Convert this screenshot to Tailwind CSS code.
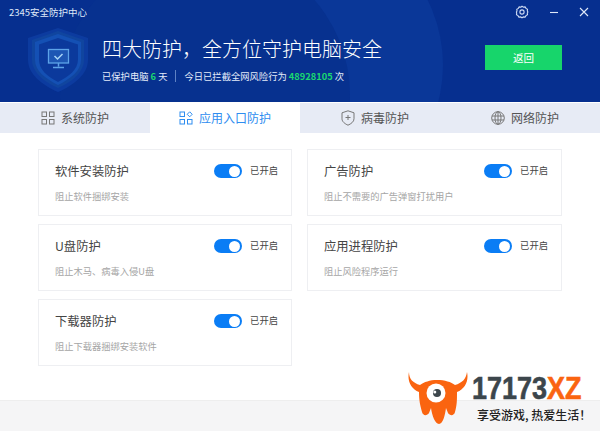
<!DOCTYPE html>
<html lang="zh-CN">
<head>
    <meta charset="UTF-8">
    <title>2345安全防护中心</title>
    <script src="https://cdn.jsdelivr.net/npm/@tailwindcss/browser@4"></script>
</head>
<body class="w-[600px] h-[431px] overflow-hidden bg-white font-['Noto_Sans_CJK_SC',sans-serif] relative">

    <!-- Header -->
    <div class="relative h-[102px] bg-[#062f8f] overflow-hidden text-white">
        <div class="absolute left-[153px] top-[-80px] w-[290px] h-[290px] rounded-full bg-[#0a3798]"></div>
        <div class="absolute left-[60px] top-[-50px] w-[290px] h-[290px] rounded-full bg-[#07318f]"></div>

        <div class="relative flex items-center justify-between h-[24px] pl-[9px] pr-[11px]">
            <span class="text-[9.5px] leading-[24px] text-[#dfe8f8]">2345安全防护中心</span>
            <div class="flex items-center gap-[20px]">
                <svg class="w-[14px] h-[14px]" viewBox="0 0 14 14" fill="none" stroke="#cfdcf4" stroke-width="1.1"><path d="M7 1.2l1.4.9 1.7-.2.9 1.5 1.5.8-.2 1.7.6 1.1-.6 1.1.2 1.7-1.5.8-.9 1.5-1.7-.2-1.4.9-1.4-.9-1.7.2-.9-1.5-1.5-.8.2-1.7L1.4 7l.6-1.1-.2-1.7 1.5-.8.9-1.500 1.700.2z"/><circle cx="7" cy="7" r="2.1"/></svg>
                <svg class="w-[10px] h-[10px]" viewBox="0 0 10 10" stroke="#dfe8f8" stroke-width="1.1"><path d="M1 5.5h8"/></svg>
                <svg class="w-[10px] h-[10px]" viewBox="0 0 10 10" stroke="#dfe8f8" stroke-width="1.1"><path d="M1 1l8 8M9 1l-8 8"/></svg>
            </div>
        </div>

        <div class="relative flex items-start mt-[3px] pl-[28px] pr-[38px]">
            <svg class="w-[60px] h-[64px] mt-[1px] shrink-0" viewBox="0 0 60 64">
                <path d="M30 0l30 10v22c0 14-14 25-30 32C14 57 0 46 0 32V10z" fill="#0c3b9f"/>
                <path d="M30 3l26 9v20c0 12-12 22-26 28C16 54 4 44 4 32V12z" fill="#10459f"/>
                <path d="M30 6l23 8v18c0 11-11 19-23 25C18 51 7 43 7 32V14z" fill="#1450b4"/>
                <path d="M30 10l20 6.500v15c0 10-9 17-20 22.500C19 48.500 11 41.500 11 31.500v-15z" fill="#0b399c"/>
                <rect x="20.500" y="21.500" width="20" height="13.500" fill="#2f74cc" fill-opacity=".5" stroke="#5da3e8" stroke-width="1.300"/>
                <path d="M26.500 28l3 3 5-5" fill="none" stroke="#a8d4f7" stroke-width="1.500"/>
                <path d="M30.500 35v3.500M25 39.500h11" stroke="#5da3e8" stroke-width="1.500"/>
            </svg>
            <div class="ml-[14px] flex-1">
                <div class="text-[20px] font-light leading-[30px] mt-[7px] text-white">四大防护，全方位守护电脑安全</div>
                <div class="flex items-center text-[9.3px] leading-[16px] mt-[4px] text-[#e4ecfa]">
                    <span>已保护电脑 <b class="text-[#1bd86f] font-bold">6</b> 天</span>
                    <span class="w-px h-[12px] bg-[#5f82c4] mx-[8px]"></span>
                    <span>今日已拦截全网风险行为 <b class="text-[#1bd86f] font-bold">48928105</b> 次</span>
                </div>
            </div>
            <div class="w-[77px] h-[25px] mt-[18px] bg-[#17d56b] text-[10.5px] leading-[25px] text-center shrink-0">返回</div>
        </div>
    </div>

    <!-- Tabs -->
    <div class="grid grid-cols-4 h-[30px] mt-px bg-[#e7ebf5] text-[12px] text-[#555]">
        <div class="flex items-center justify-center gap-[6px]">
            <svg class="w-[14px] h-[14px]" viewBox="0 0 14 14" fill="none" stroke="#777" stroke-width="1"><rect x="1" y="1" width="4.500" height="4.500"/><rect x="8.500" y="1" width="4.500" height="4.500"/><rect x="1" y="8.500" width="4.500" height="4.500"/><rect x="8.500" y="8.500" width="4.500" height="4.500"/></svg>
            系统防护
        </div>
        <div class="flex items-center justify-center gap-[6px] bg-white text-[#2e8df0]">
            <svg class="w-[14px] h-[14px]" viewBox="0 0 14 14" fill="none" stroke="#2e8df0" stroke-width="1"><rect x="1" y="1" width="4.500" height="4.500"/><path d="M10.700.8l2.500 2.500-2.500 2.500-2.500-2.500z"/><rect x="1" y="8.500" width="4.500" height="4.500"/><rect x="8.500" y="8.500" width="4.500" height="4.500"/></svg>
            应用入口防护
        </div>
        <div class="flex items-center justify-center gap-[6px]">
            <svg class="w-[14px] h-[16px]" viewBox="0 0 14 16" fill="none" stroke="#777" stroke-width="1"><path d="M7 .8l6 2v6c0 3-3 5-6 6.400C4 13.800 1 11.800 1 8.800v-6z"/><path d="M7 5v5M4.500 7.500h5"/></svg>
            病毒防护
        </div>
        <div class="flex items-center justify-center gap-[6px]">
            <svg class="w-[14px] h-[14px]" viewBox="0 0 14 14" fill="none" stroke="#777" stroke-width="1"><circle cx="7" cy="7" r="6.300"/><ellipse cx="7" cy="7" rx="3" ry="6.300"/><path d="M1 5h12M1 9h12M7 .7v12.600"/></svg>
            网络防护
        </div>
    </div>

    <!-- Cards -->
    <div class="grid grid-cols-[254px_255px] gap-x-[15px] gap-y-[8px] pl-[38px] pt-[16px]">
        <div class="h-[67px] border border-[#eeeff2] pl-[16px] pr-[13px] pt-[13px]">
            <div class="flex items-center justify-between h-[16px]">
                <span class="text-[12.300px] text-[#444]">软件安装防护</span>
                <div class="flex items-center gap-[8px]">
                    <span class="flex justify-end items-center w-[28px] h-[14px] p-[2px] rounded-full bg-[#0a7df5]"><i class="w-[11px] h-[11px] rounded-full bg-white"></i></span>
                    <span class="text-[9.300px] text-[#444]">已开启</span>
                </div>
            </div>
            <div class="text-[9.250px] leading-[12px] mt-[11px] text-[#a5a5a5]">阻止软件捆绑安装</div>
        </div>
        <div class="h-[67px] border border-[#eeeff2] pl-[16px] pr-[13px] pt-[13px]">
            <div class="flex items-center justify-between h-[16px]">
                <span class="text-[12.300px] text-[#444]">广告防护</span>
                <div class="flex items-center gap-[8px]">
                    <span class="flex justify-end items-center w-[28px] h-[14px] p-[2px] rounded-full bg-[#0a7df5]"><i class="w-[11px] h-[11px] rounded-full bg-white"></i></span>
                    <span class="text-[9.300px] text-[#444]">已开启</span>
                </div>
            </div>
            <div class="text-[9.250px] leading-[12px] mt-[11px] text-[#a5a5a5]">阻止不需要的广告弹窗打扰用户</div>
        </div>
        <div class="h-[67px] border border-[#eeeff2] pl-[16px] pr-[13px] pt-[13px]">
            <div class="flex items-center justify-between h-[16px]">
                <span class="text-[12.300px] text-[#444]">U盘防护</span>
                <div class="flex items-center gap-[8px]">
                    <span class="flex justify-end items-center w-[28px] h-[14px] p-[2px] rounded-full bg-[#0a7df5]"><i class="w-[11px] h-[11px] rounded-full bg-white"></i></span>
                    <span class="text-[9.300px] text-[#444]">已开启</span>
                </div>
            </div>
            <div class="text-[9.250px] leading-[12px] mt-[11px] text-[#a5a5a5]">阻止木马、病毒入侵U盘</div>
        </div>
        <div class="h-[67px] border border-[#eeeff2] pl-[16px] pr-[13px] pt-[13px]">
            <div class="flex items-center justify-between h-[16px]">
                <span class="text-[12.300px] text-[#444]">应用进程防护</span>
                <div class="flex items-center gap-[8px]">
                    <span class="flex justify-end items-center w-[28px] h-[14px] p-[2px] rounded-full bg-[#0a7df5]"><i class="w-[11px] h-[11px] rounded-full bg-white"></i></span>
                    <span class="text-[9.300px] text-[#444]">已开启</span>
                </div>
            </div>
            <div class="text-[9.250px] leading-[12px] mt-[11px] text-[#a5a5a5]">阻止风险程序运行</div>
        </div>
        <div class="h-[67px] border border-[#eeeff2] pl-[16px] pr-[13px] pt-[13px]">
            <div class="flex items-center justify-between h-[16px]">
                <span class="text-[12.300px] text-[#444]">下载器防护</span>
                <div class="flex items-center gap-[8px]">
                    <span class="flex justify-end items-center w-[28px] h-[14px] p-[2px] rounded-full bg-[#0a7df5]"><i class="w-[11px] h-[11px] rounded-full bg-white"></i></span>
                    <span class="text-[9.300px] text-[#444]">已开启</span>
                </div>
            </div>
            <div class="text-[9.250px] leading-[12px] mt-[11px] text-[#a5a5a5]">阻止下载器捆绑安装软件</div>
        </div>
    </div>

    <!-- Footer -->
    <div class="absolute left-0 right-0 bottom-0 h-[31px] bg-[#f5f5f6] border-t border-[#eeeeee]"></div>

    <!-- Watermark -->
    <div class="absolute left-[408px] top-[372px] flex">
        <svg class="w-[60px] h-[52px] shrink-0" viewBox="0 0 60 52">
            <path d="M1 0c0 7 4 11 11 13 4-3 10-5 17-5 8 0 14 2 18 5 7-2 11-6 12-13 2 9-2 17-10 20 0 8 0 13-2 20-1 4-5 4-7 1l-2-5c-1 7-3 16-7 16s-7-9-8-16l-2 5c-2 3-6 3-7-1-2-7-3-12-3-20C3 17-1 9 1 0z" fill="#fa6410"/>
            <circle cx="28" cy="21" r="9.500" fill="#fff"/>
            <circle cx="29" cy="21" r="4" fill="#3c464c"/>
            <circle cx="26.800" cy="20" r="1.500" fill="#fff"/>
        </svg>
        <div class="ml-[4px] mt-[4px] w-[118px]">
            <div class="font-['Liberation_Sans',sans-serif] font-bold text-[31px] leading-[26px] origin-left scale-x-[0.87] whitespace-nowrap [-webkit-text-stroke:0.6px] text-[#3c464c]">17173<span class="text-[#fa6410]">XZ</span></div>
            <div class="text-[12px] leading-[14px] mt-[6px] ml-[5px] font-medium whitespace-nowrap text-[#222]">享受游戏, 热爱生活！</div>
        </div>
    </div>
</body>
</html>
